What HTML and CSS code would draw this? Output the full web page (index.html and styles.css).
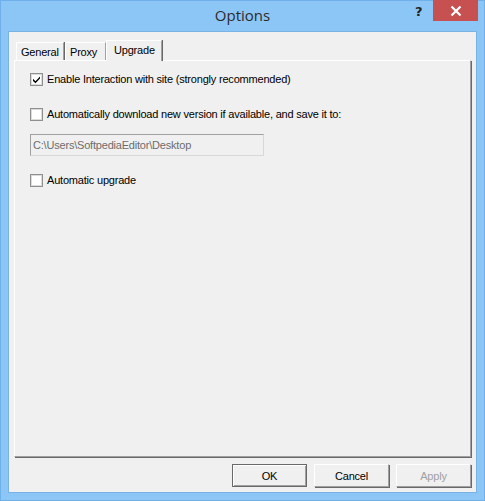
FILE: index.html
```html
<!DOCTYPE html>
<html>
<head>
<meta charset="utf-8">
<link rel="stylesheet" href="styles.css">
</head>
<body>
<div class="window">
  <div class="titlebar">
    <div class="title">Options</div>
    <div class="help">?</div>
    <div class="close"><svg width="12" height="12" viewBox="0 0 12 12"><path d="M1.5 1.5 L10.5 10.5 M10.5 1.5 L1.5 10.5" stroke="#fff" stroke-width="2.2" fill="none"/></svg></div>
  </div>
  <div class="client">
    <div class="tabs">
      <div class="tab tab-general">General</div>
      <div class="tab tab-proxy">Proxy</div>
      <div class="tab tab-active">Upgrade</div>
    </div>
    <div class="panel">
      <label class="check row1"><span class="box checked"><svg width="9" height="9" viewBox="0 0 9 9"><path d="M1 3.8 L3.5 6.2 L8 1.5 L8 3.6 L3.5 8.3 L1 5.9 Z" fill="#000"/></svg></span><span class="label">Enable Interaction with site (strongly recommended)</span></label>
      <label class="check row2"><span class="box"></span><span class="label">Automatically download new version if available, and save it to:</span></label>
      <div class="textbox">C:\Users\SoftpediaEditor\Desktop</div>
      <label class="check row3"><span class="box"></span><span class="label">Automatic upgrade</span></label>
    </div>
    <div class="buttons">
      <div class="btn btn-default">OK</div>
      <div class="btn">Cancel</div>
      <div class="btn btn-disabled">Apply</div>
    </div>
  </div>
</div>
</body>
</html>
```

FILE: styles.css
```css
html, body {
  margin: 0;
  padding: 0;
  background: #8cc6f6;
}
.window {
  width: 485px;
  height: 501px;
  box-sizing: border-box;
  background: #8cc6f6;
  border: 1px solid #6fb0e8;
  display: flex;
  flex-direction: column;
  position: relative;
}
.titlebar {
  height: 30px;
  position: relative;
  display: flex;
  justify-content: center;
  align-items: flex-start;
}
.title {
  font-family: "Open Sans", "Noto Sans", sans-serif;
  font-size: 15px;
  line-height: 20px;
  color: #2b2b2b;
  margin-top: 4px;
}
.help {
  position: absolute;
  left: 414px;
  top: 3px;
  font-family: "DejaVu Sans", sans-serif;
  font-weight: bold;
  font-size: 13px;
  color: #222;
}
.close {
  position: absolute;
  left: 432px;
  top: -1px;
  width: 45px;
  height: 21px;
  background: #c75050;
  display: flex;
  align-items: center;
  justify-content: center;
}
.client {
  margin: 0 7px 7px 7px;
  flex: 1;
  background: #f0f0f0;
  border: 1px solid #79b3e6;
  display: flex;
  flex-direction: column;
  padding: 8px 5px 0 5px;
  font-family: "Liberation Sans", Arial, sans-serif;
  font-size: 11px;
  letter-spacing: -0.2px;
  color: #000;
}
.tabs {
  display: flex;
  height: 20px;
  padding-left: 2px;
  align-items: flex-end;
  position: relative;
  z-index: 2;
}
.tab {
  box-sizing: border-box;
  height: 18px;
  border-top: 1px solid #fff;
  border-left: 1px solid #fff;
  border-right: 1px solid #a0a0a0;
  box-shadow: 1px 0 0 #696969;
  padding: 3px 0 0 4px;
  background: #f0f0f0;
  font-size: 11px;
  line-height: 13px;
  white-space: nowrap;
}
.tab-general { width: 48px; margin-right: 1px; }
.tab-proxy { width: 41px; }
.tab-active {
  width: 56px;
  height: 21px;
  margin-bottom: -1px;
  padding-top: 3px;
  padding-left: 7px;
}
.panel {
  height: 397px;
  box-sizing: border-box;
  border-top: 1px solid #fff;
  border-left: 1px solid #fff;
  border-right: 1px solid #a0a0a0;
  border-bottom: 1px solid #a0a0a0;
  box-shadow: 1px 1px 0 #696969;
  position: relative;
  display: flex;
  flex-direction: column;
  padding-left: 15px;
  padding-top: 12px;
}
.check {
  display: flex;
  align-items: center;
  height: 13px;
  line-height: 13px;
}
.box {
  box-sizing: border-box;
  flex: none;
  width: 13px;
  height: 13px;
  background: #fff;
  border: 1px solid #8e8f8f;
  box-shadow: inset 0 0 0 1px #dcdcdc;
  display: flex;
  align-items: center;
  justify-content: center;
  margin-right: 4px;
}
.label {
  font-size: 11px;
  white-space: nowrap;
}
.row2 { margin-top: 22px; }
.textbox {
  margin-top: 13px;
  width: 234px;
  height: 22px;
  flex: none;
  box-sizing: border-box;
  border-top: 1px solid #a0a0a0;
  border-left: 1px solid #a0a0a0;
  border-right: 1px solid #d8d8d8;
  border-bottom: 1px solid #d8d8d8;
  color: #6d6d6d;
  font-size: 11px;
  padding: 3px 2px;
  line-height: 14px;
}
.row3 { margin-top: 18px; }
.buttons {
  display: flex;
  justify-content: flex-end;
  gap: 7px;
  margin-top: 7px;
}
.btn {
  box-sizing: border-box;
  width: 75px;
  height: 23px;
  background: #f0f0f0;
  border-top: 1px solid #fff;
  border-left: 1px solid #fff;
  border-right: 1px solid #a0a0a0;
  border-bottom: 1px solid #a0a0a0;
  box-shadow: 1px 1px 0 #696969;
  display: flex;
  align-items: center;
  justify-content: center;
  font-size: 11px;
}
.btn-default {
  border: 1px solid #696969;
  box-shadow: inset 1px 1px 0 #fff, inset -1px -1px 0 #a0a0a0;
}
.btn-disabled {
  color: #a0a0a0;
}
```
